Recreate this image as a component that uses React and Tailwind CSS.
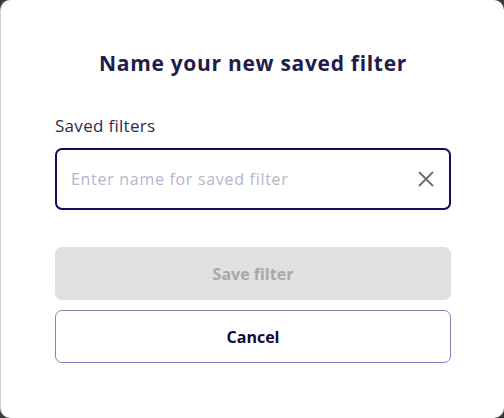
export default function App() {
    return (
        <div className="w-full h-[418px] bg-[#3b3b3b] overflow-hidden" style={{ fontFamily: "'Open Sans', 'Noto Sans', sans-serif" }}>
            <div className="h-full bg-white rounded-[10px] border-l border-[#cfcfd4] pl-[54px] pr-[53px] pt-[49px]">
                <h2 className="text-center text-[21px] leading-[28px] font-bold tracking-[0.7px] text-[#221c4a]">
                    Name your new saved filter
                </h2>

                <label className="block mt-[37px] text-[17px] leading-[24px] tracking-[0.3px] text-[#2e2a4f]">Saved filters</label>

                <div className="mt-[10px] h-[62px] border-2 border-[#120d5c] rounded-[7px] flex items-center pl-[14px] pr-[15px]">
                    <input
                        type="text"
                        placeholder="Enter name for saved filter"
                        className="flex-1 bg-transparent text-[16px] tracking-[0.7px] text-[#2e2a4f] placeholder-[#b7b5c7] outline-none"
                    />
                    {/* clear icon */}
                    <svg width="16" height="16" viewBox="0 0 16 16" fill="none" stroke="#6b6b6b" strokeWidth="1.8" strokeLinecap="round">
                        <path d="M1.5 1.5L14.5 14.5M14.5 1.5L1.5 14.5" />
                    </svg>
                </div>

                <button
                    disabled
                    className="mt-[37px] w-full h-[53px] rounded-[7px] bg-[#e0e0e0] text-[16px] font-bold text-[#a8a8a8]"
                >
                    Save filter
                </button>
                <button className="mt-[10px] w-full h-[53px] rounded-[7px] border border-[#8782b9] bg-white text-[16px] font-bold text-[#0e0b3f]">
                    Cancel
                </button>
            </div>
        </div>
    );
}
